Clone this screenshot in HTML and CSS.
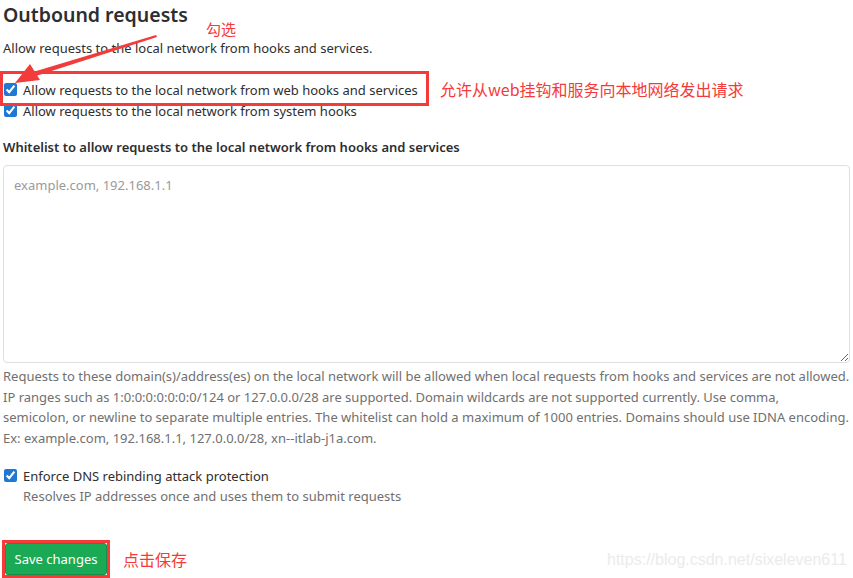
FILE: index.html
```html
<!DOCTYPE html>
<html lang="en">
<head>
    <meta charset="UTF-8">
    <title>Outbound requests</title>
    <link rel="stylesheet" href="styles.css">
</head>
<body>
    <div class="page">
        <!-- Sezione impostazioni -->
        <section class="settings">
            <h2 class="title">Outbound requests</h2>
            <p class="subtitle">Allow requests to the local network from hooks and services.</p>

            <div class="checks">
                <label class="check">
                    <input type="checkbox" checked>
                    <span>Allow requests to the local network from web hooks and services</span>
                </label>
                <label class="check">
                    <input type="checkbox" checked>
                    <span>Allow requests to the local network from system hooks</span>
                </label>
            </div>

            <label class="field-label" for="whitelist">Whitelist to allow requests to the local network from hooks and services</label>
            <textarea id="whitelist" class="whitelist" placeholder="example.com, 192.168.1.1"></textarea>
            <p class="help">Requests to these domain(s)/address(es) on the local network will be allowed when local requests from hooks and services are not allowed.<br>IP ranges such as 1:0:0:0:0:0:0:0/124 or 127.0.0.0/28 are supported. Domain wildcards are not supported currently. Use comma,<br>semicolon, or newline to separate multiple entries. The whitelist can hold a maximum of 1000 entries. Domains should use IDNA encoding.<br>Ex: example.com, 192.168.1.1, 127.0.0.0/28, xn--itlab-j1a.com.</p>

            <label class="check dns">
                <input type="checkbox" checked>
                <span>Enforce DNS rebinding attack protection</span>
            </label>
            <p class="check-help">Resolves IP addresses once and uses them to submit requests</p>

            <div class="actions">
                <span class="mark">
                    <button class="btn-save">Save changes</button>
                </span>
                <span class="note">点击保存</span>
            </div>
        </section>

        <!-- Annotazioni -->
        <span class="note note-check">勾选</span>
        <div class="mark-box"></div>
        <span class="note note-allow">允许从web挂钩和服务向本地网络发出请求</span>
        <svg class="arrow" width="170" height="90" viewBox="0 0 170 90">
            <polygon points="156,35 157,37 36,76 33,72" fill="#f23b3b"/>
            <polygon points="15,83 30,64 40,80" fill="#f23b3b"/>
        </svg>
        <span class="watermark">https://blog.csdn.net/sixeleven611</span>
    </div>
</body>
</html>
```

FILE: styles.css
```css
:root {
    --text-color: #2e2e2e;
    --muted-color: #707070;
    --border-color: #dfdfdf;
    --red: #f53a3a;
    --green: #1aaa55;
    --font-family: "Segoe UI", "Noto Sans", "Noto Sans CJK SC", sans-serif;
}

* {
    margin: 0;
    padding: 0;
    box-sizing: border-box;
}

body {
    background: #fff;
    color: var(--text-color);
    font-family: var(--font-family);
    font-size: 13px;
}

.page {
    position: relative;
    width: 853px;
    height: 578px;
    overflow: hidden;
}

.settings {
    display: flex;
    flex-direction: column;
    align-items: flex-start;
    padding-left: 3px;
}

.title {
    font-size: 19.5px;
    font-weight: 600;
    line-height: 30px;
}

.subtitle {
    margin-top: 10px;
    line-height: 16px;
}

.checks {
    margin-top: 23px;
    display: flex;
    flex-direction: column;
}

.check {
    display: flex;
    align-items: center;
    gap: 6px;
    height: 21px;
    padding-left: 1px;
}

.check input {
    width: 13px;
    height: 13px;
    margin: 0;
    accent-color: #1f78d1;
}

.field-label {
    margin-top: 16px;
    font-weight: 600;
    line-height: 20px;
}

.whitelist {
    margin-top: 8px;
    width: 847px;
    height: 198px;
    border: 1px solid var(--border-color);
    border-radius: 4px;
    padding: 10px 10px;
    font-family: var(--font-family);
    font-size: 13px;
    resize: vertical;
}

.whitelist::placeholder {
    color: #9a9a9a;
}

.help {
    margin-top: 3px;
    color: var(--muted-color);
    line-height: 20.6px;
    font-size: 13px;
    white-space: nowrap;
}

.dns {
    margin-top: 17px;
}

.check-help {
    color: var(--muted-color);
    padding-left: 20px;
    line-height: 20px;
}

.actions {
    margin-top: 34px;
    display: flex;
    align-items: center;
    gap: 13px;
}

.mark {
    display: inline-block;
    padding: 3px;
    margin-left: -1px;
    outline: 3px solid var(--red);
    outline-offset: -3px;
}

.btn-save {
    display: block;
    height: 32px;
    width: 102px;
    background: var(--green);
    border: 1px solid #168f48;
    border-radius: 3px;
    color: #fff;
    font-family: var(--font-family);
    font-size: 13px;
}

.note {
    color: var(--red);
    font-family: "Noto Sans CJK SC", sans-serif;
    font-size: 16px;
    line-height: 1;
}

.note-check {
    position: absolute;
    left: 206px;
    top: 21px;
    font-size: 15px;
}

.note-allow {
    position: absolute;
    left: 440px;
    top: 81px;
}

.mark-box {
    position: absolute;
    left: 0;
    top: 71px;
    width: 429px;
    height: 35px;
    border: 3px solid var(--red);
}

.arrow {
    position: absolute;
    left: 0;
    top: 0;
}

.watermark {
    position: absolute;
    left: 607px;
    top: 551px;
    font-family: "Liberation Sans", sans-serif;
    font-size: 16px;
    color: #ebebeb;
}
```
